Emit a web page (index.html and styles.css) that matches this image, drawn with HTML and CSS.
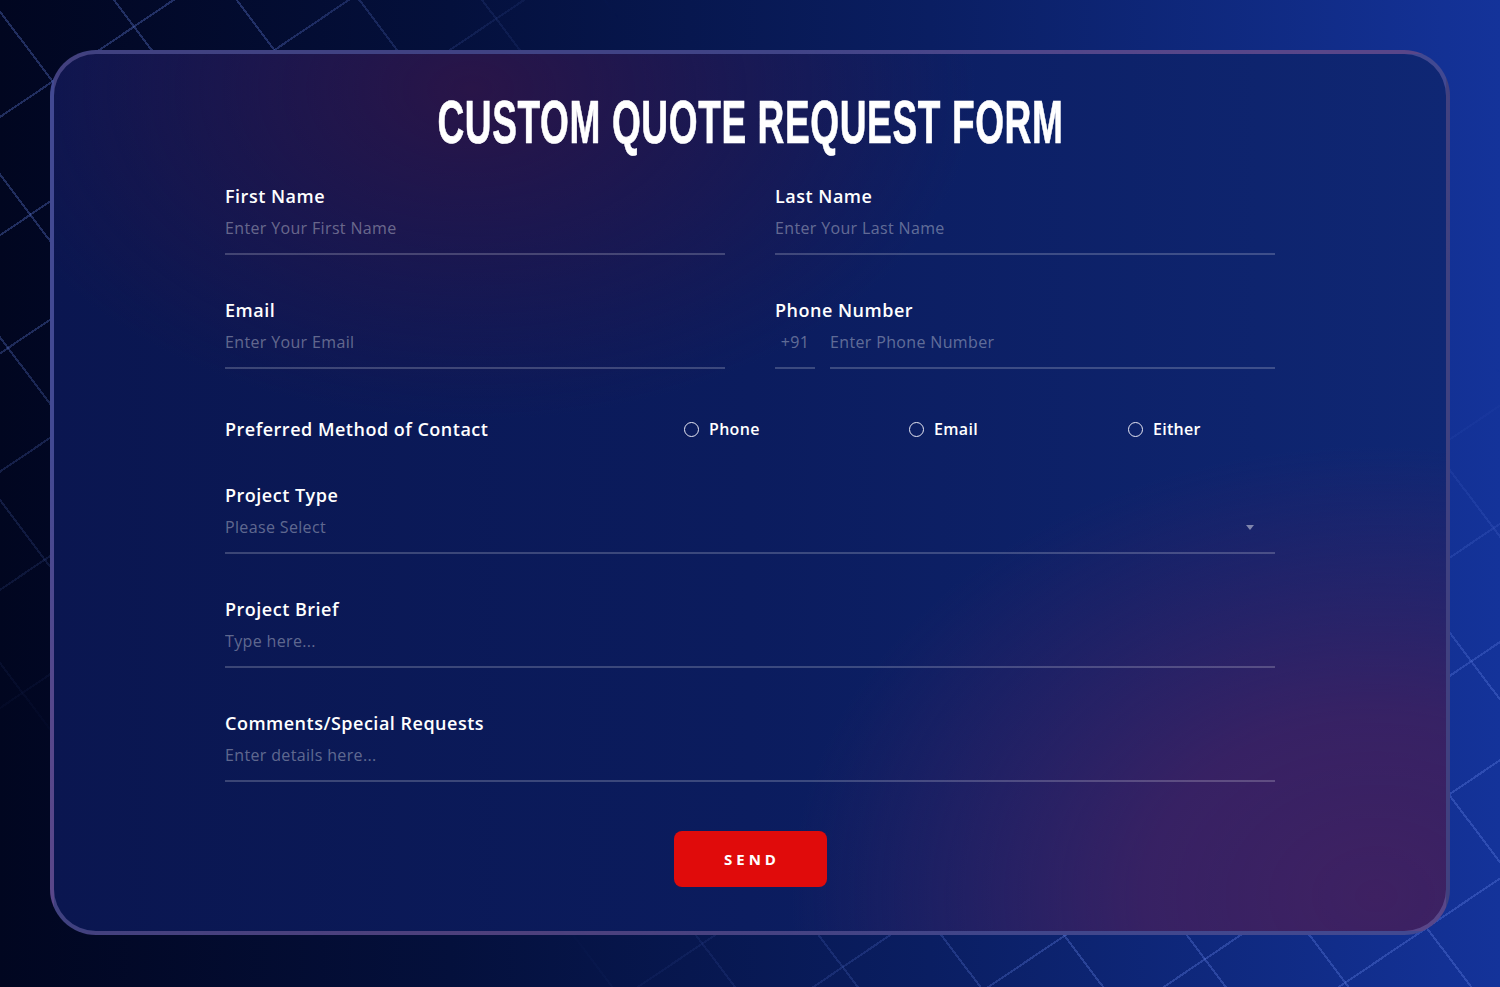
FILE: index.html
```html
<!DOCTYPE html>
<html lang="en">
<head>
<meta charset="utf-8">
<title>Custom Quote Request Form</title>
<link rel="stylesheet" href="styles.css">
</head>
<body>
<div class="bg-grid" aria-hidden="true"></div>
<main class="page">
  <form class="card" onsubmit="return false">
    <h1 class="title"><span class="title-text">CUSTOM QUOTE REQUEST FORM</span></h1>
    <div class="fields">
      <div class="row two">
        <label class="field">
          <span class="label">First Name</span>
          <input class="input" type="text" placeholder="Enter Your First Name">
        </label>
        <label class="field">
          <span class="label">Last Name</span>
          <input class="input" type="text" placeholder="Enter Your Last Name">
        </label>
      </div>
      <div class="row two">
        <label class="field">
          <span class="label">Email</span>
          <input class="input" type="email" placeholder="Enter Your Email">
        </label>
        <div class="field">
          <span class="label">Phone Number</span>
          <div class="phone">
            <span class="code">+91</span>
            <input class="input" type="tel" placeholder="Enter Phone Number">
          </div>
        </div>
      </div>
      <div class="row contact">
        <span class="label">Preferred Method of Contact</span>
        <label class="option"><input class="radio" type="radio" name="contact"><span>Phone</span></label>
        <label class="option"><input class="radio" type="radio" name="contact"><span>Email</span></label>
        <label class="option"><input class="radio" type="radio" name="contact"><span>Either</span></label>
      </div>
      <label class="field">
        <span class="label">Project Type</span>
        <span class="select-wrap">
          <select class="select">
            <option>Please Select</option>
            <option>Website</option>
            <option>Mobile App</option>
            <option>Branding</option>
          </select>
          <svg class="caret" width="8" height="5" viewBox="0 0 8 5"><path d="M0 0h8L4 5z" fill="currentColor"/></svg>
        </span>
      </label>
      <label class="field">
        <span class="label">Project Brief</span>
        <input class="input" type="text" placeholder="Type here...">
      </label>
      <label class="field">
        <span class="label">Comments/Special Requests</span>
        <input class="input" type="text" placeholder="Enter details here...">
      </label>
    </div>
    <div class="actions">
      <button class="send" type="submit">SEND</button>
    </div>
  </form>
</main>
</body>
</html>
```
FILE: styles.css
```css
* { box-sizing: border-box; }

html, body {
  margin: 0;
  height: 100%;
}

body {
  min-height: 987px;
  position: relative;
  overflow: hidden;
  font-family: "Open Sans", "Liberation Sans", sans-serif;
  color: #fff;
  background: linear-gradient(to right, #010620 0%, #04103c 30%, #0a1e62 62%, #14339a 100%);
}

.bg-grid {
  position: absolute;
  inset: 0;
  background-image:
    repeating-linear-gradient(53deg, transparent 0 96px, rgba(110, 140, 240, 0.3) 96px 98px),
    repeating-linear-gradient(146deg, transparent 0 96px, rgba(110, 140, 240, 0.3) 96px 98px);
  -webkit-mask-image:
    radial-gradient(ellipse 620px 760px at 0 0, #000 40%, transparent 100%),
    radial-gradient(ellipse 950px 620px at 100% 100%, #000 45%, transparent 100%);
  mask-image:
    radial-gradient(ellipse 620px 760px at 0 0, #000 40%, transparent 100%),
    radial-gradient(ellipse 950px 620px at 100% 100%, #000 45%, transparent 100%);
}

.page {
  position: relative;
  padding: 50px;
}

.card {
  border: 4px solid rgba(118, 108, 176, 0.5);
  border-radius: 46px;
  padding: 36px 0 44px;
  background:
    radial-gradient(ellipse 700px 460px at 30% 4%, rgba(44, 20, 70, 0.9), rgba(44, 20, 70, 0) 72%),
    radial-gradient(ellipse 780px 600px at 95% 96%, rgba(62, 33, 98, 1) 0%, rgba(62, 33, 98, 0.85) 30%, rgba(62, 33, 98, 0) 75%),
    linear-gradient(to right, #0a1650 0%, #0b1c5e 50%, #0f2774 100%);
}

.title {
  margin: 0;
  text-align: center;
  font-family: "Liberation Sans", Arial, sans-serif;
  font-weight: 700;
  font-size: 62px;
  line-height: 63px;
}

.title-text {
  display: inline-block;
  transform: scaleX(0.598);
  letter-spacing: 1px;
  -webkit-text-stroke: 0.7px #fff;
}

.fields {
  width: 1050px;
  margin: 30px auto 0;
  display: flex;
  flex-direction: column;
  gap: 42px;
}

.row.two {
  display: grid;
  grid-template-columns: 1fr 1fr;
  column-gap: 50px;
}

.field {
  display: flex;
  flex-direction: column;
}

.label {
  font-weight: 600;
  font-size: 18px;
  line-height: 27px;
  letter-spacing: 0.5px;
  margin-bottom: 6px;
}

.input,
.select {
  display: block;
  width: 100%;
  height: 39px;
  margin: 0;
  padding: 0 0 13px;
  border: 0;
  border-bottom: 2px solid rgba(255, 255, 255, 0.2);
  border-radius: 0;
  background: transparent;
  outline: none;
  color: #fff;
  font-family: "Open Sans", "Liberation Sans", sans-serif;
  font-size: 16px;
  line-height: 24px;
  letter-spacing: 0.35px;
}

.input::placeholder {
  color: rgba(255, 255, 255, 0.36);
}

.phone {
  display: flex;
  gap: 15px;
}

.code {
  flex: 0 0 40px;
  height: 39px;
  text-align: center;
  font-size: 16px;
  line-height: 24px;
  letter-spacing: 0.35px;
  color: rgba(255, 255, 255, 0.36);
  border-bottom: 2px solid rgba(255, 255, 255, 0.2);
}

.phone .input {
  flex: 1;
}

.row.contact {
  display: grid;
  grid-template-columns: 459px 225px 219px 1fr;
  align-items: center;
  margin: 5px 0 -3px;
}

.row.contact .label {
  margin-bottom: 0;
}

.option {
  display: flex;
  align-items: center;
  gap: 10px;
  font-weight: 600;
  font-size: 16px;
  line-height: 27px;
  letter-spacing: 0.3px;
}

.radio {
  appearance: none;
  -webkit-appearance: none;
  width: 15px;
  height: 15px;
  margin: 0;
  border: 1.5px solid #e8e8f4;
  border-radius: 50%;
  background: transparent;
}

.select-wrap {
  display: flex;
  align-items: flex-start;
  border-bottom: 2px solid rgba(255, 255, 255, 0.2);
  color: rgba(255, 255, 255, 0.36);
}

.select {
  flex: 1;
  height: 37px;
  border-bottom: 0;
  appearance: none;
  -webkit-appearance: none;
  color: rgba(255, 255, 255, 0.36);
}

.select option {
  color: #000;
}

.caret {
  margin: 10px 21px 0 0;
  color: rgba(255, 255, 255, 0.45);
}

.actions {
  margin-top: 49px;
  text-align: center;
}

.send {
  width: 153px;
  height: 56px;
  border: 0;
  border-radius: 8px;
  background: #e00b0b;
  color: #fff;
  font-family: "Open Sans", "Liberation Sans", sans-serif;
  font-weight: 700;
  font-size: 15px;
  letter-spacing: 4px;
  padding: 0 0 0 4px;
  cursor: pointer;
}
```
